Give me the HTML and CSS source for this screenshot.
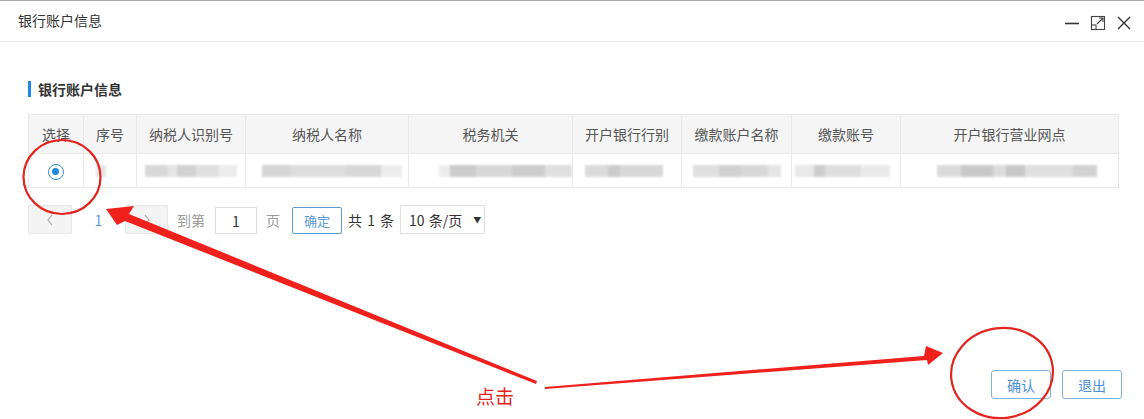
FILE: index.html
```html
<!DOCTYPE html>
<html lang="zh">
<head>
<meta charset="utf-8">
<title>银行账户信息</title>
<link rel="stylesheet" href="styles.css">
</head>
<body>
<div class="window">
  <div class="titlebar">
    <span class="title">银行账户信息</span>
    <div class="controls">
      <svg class="ic" width="16" height="16" viewBox="0 0 16 16"><line x1="1" y1="8.5" x2="15" y2="8.5" stroke="#333" stroke-width="1.6"/></svg>
      <svg class="ic" width="16" height="16" viewBox="0 0 16 16" fill="none" stroke="#444" stroke-width="1.1"><rect x="1.5" y="1.5" width="13" height="13"/><rect x="1.5" y="10" width="4.5" height="4.5"/><path d="M7 9 L13 3 M9 3 H13 V7"/></svg>
      <svg class="ic" width="16" height="16" viewBox="0 0 16 16"><path d="M2 2 L14 14 M14 2 L2 14" stroke="#333" stroke-width="1.4"/></svg>
    </div>
  </div>
  <div class="main">
    <div class="section-title">银行账户信息</div>
    <div class="table">
      <div class="row head">
        <div class="c c1">选择</div>
        <div class="c c2">序号</div>
        <div class="c c3">纳税人识别号</div>
        <div class="c c4">纳税人名称</div>
        <div class="c c5">税务机关</div>
        <div class="c c6">开户银行行别</div>
        <div class="c c7">缴款账户名称</div>
        <div class="c c8">缴款账号</div>
        <div class="c c9">开户银行营业网点</div>
      </div>
      <div class="row body">
        <div class="c c1"><span class="radio"><span class="dot"></span></span></div>
        <div class="c c2"><span class="blur b-s"></span></div>
        <div class="c c3"><span class="blur b-a"></span></div>
        <div class="c c4"><span class="blur b-b"></span></div>
        <div class="c c5"><span class="blur b-c"></span></div>
        <div class="c c6"><span class="blur b-d"></span></div>
        <div class="c c7"><span class="blur b-e"></span></div>
        <div class="c c8"><span class="blur b-f"></span></div>
        <div class="c c9"><span class="blur b-g"></span></div>
      </div>
    </div>
    <div class="pager">
      <span class="pbtn"><svg width="10" height="14" viewBox="0 0 10 14"><path d="M7 2 L3 7 L7 12" fill="none" stroke="#aaa" stroke-width="1.2"/></svg></span>
      <span class="pnum">1</span>
      <span class="pbtn"><svg width="10" height="14" viewBox="0 0 10 14"><path d="M3 2 L7 7 L3 12" fill="none" stroke="#aaa" stroke-width="1.2"/></svg></span>
      <span class="plabel">到第</span>
      <span class="pinput">1</span>
      <span class="plabel">页</span>
      <span class="pok">确定</span>
      <span class="ptotal">共 1 条</span>
      <span class="psel">10 条/页 <span class="caret">▼</span></span>
    </div>
    <div class="footer">
      <span class="fbtn">确认</span>
      <span class="fbtn">退出</span>
    </div>
  </div>
  <svg class="annot" width="1144" height="419" viewBox="0 0 1144 419">
    <ellipse cx="62" cy="176" rx="38.5" ry="37" fill="none" stroke="#e3241f" stroke-width="2.2"/>
    <ellipse cx="1002" cy="372" rx="51" ry="45" fill="none" stroke="#e3241f" stroke-width="2.2" transform="rotate(-8 1002 372)"/>
    <polygon points="106,208 134,205 129,213 537,380 536,383 125,220 117,224" fill="#f0201c"/>
    <polygon points="545,386 924,355 926,345 943,352 928,364 927,359 545,388" fill="#f0201c"/>
    <text x="476" y="403" class="click">点击</text>
  </svg>
</div>
</body>
</html>
```

FILE: styles.css
```css
* { box-sizing: border-box; }
html, body { margin: 0; padding: 0; background: #fff; }
body {
  font-family: "Noto Sans CJK SC", "Liberation Sans", sans-serif;
  font-size: 14px;
  color: #333;
}
.window {
  position: relative;
  width: 1144px;
  height: 419px;
  display: flex;
  flex-direction: column;
  border-top: 1px solid #a8a8a8;
  overflow: hidden;
}
.titlebar {
  height: 41px;
  flex: none;
  border-bottom: 1px solid #e8e8e8;
  display: flex;
  align-items: center;
  justify-content: space-between;
  padding: 0 12px 0 18px;
}
.title { font-size: 14px; color: #333; line-height: 1; margin-top: -2px; }
.controls { display: flex; align-items: center; gap: 10px; margin-top: 4px; }
.ic { display: block; }
.main {
  flex: 1;
  display: flex;
  flex-direction: column;
  padding: 39px 22px 20px 28px;
}
.section-title {
  font-weight: bold;
  font-size: 14px;
  line-height: 16px;
  border-left: 3px solid #1e88e5;
  padding-left: 7px;
  color: #333;
}
.table {
  margin-top: 17px;
  width: 1091px;
  border: 1px solid #e8e8e8;
}
.row { display: flex; }
.row.head { height: 39px; background: #f5f5f5; border-bottom: 1px solid #e8e8e8; }
.row.body { height: 33px; background: #fff; }
.c {
  display: flex;
  align-items: center;
  justify-content: center;
  border-right: 1px solid #e8e8e8;
  color: #555;
  font-size: 14px;
  position: relative;
}
.c:last-child { border-right: none; }
.c1 { width: 55px; }
.c2 { width: 53px; }
.c3 { width: 109px; }
.c4 { width: 163px; }
.c5 { width: 164px; }
.c6 { width: 109px; }
.c7 { width: 110px; }
.c8 { width: 109px; }
.c9 { flex: 1; }
.radio {
  width: 16px; height: 16px;
  border: 1.5px solid #3a8ee6;
  border-radius: 50%;
  display: flex; align-items: center; justify-content: center;
  margin-left: -1px;
  margin-top: 2px;
}
.dot { width: 7px; height: 7px; border-radius: 50%; background: #1e88e5; }
.blur {
  display: block;
  height: 12px;
  filter: blur(1.2px);
  opacity: 0.75;
}
.b-s { width: 10px; background: #ddd; margin-left: -18px; }
.b-a { width: 92px; background: linear-gradient(90deg,#ccc 0 25%,#ddd 25% 35%,#c4c4c4 35% 55%,#d6d6d6 55% 80%,#e6e6e6 80%); }
.b-b { width: 140px; background: linear-gradient(90deg,#c8c8c8 0 20%,#d2d2d2 20% 60%,#ccc 60% 85%,#e8e8e8 85%); margin-left: 10px; }
.b-c { width: 140px; background: linear-gradient(90deg,#e8e8e8 0 8%,#bbb 8% 28%,#ccc 28% 55%,#bdbdbd 55% 80%,#d6d6d6 80%); margin-left: 30px; }
.b-d { width: 78px; background: linear-gradient(90deg,#d0d0d0 0 30%,#bbb 30% 45%,#ccc 45%); margin-left: -6px; }
.b-e { width: 88px; background: linear-gradient(90deg,#d6d6d6 0 30%,#c2c2c2 30% 55%,#ccc 55% 85%,#ddd 85%); }
.b-f { width: 95px; background: linear-gradient(90deg,#e2e2e2 0 20%,#bdbdbd 20% 32%,#d4d4d4 32% 70%,#e4e4e4 70%); margin-left: -8px; }
.b-g { width: 160px; background: linear-gradient(90deg,#d0d0d0 0 15%,#b8b8b8 15% 35%,#d2d2d2 35% 43%,#b6b6b6 43% 55%,#d6d6d6 55% 85%,#c4c4c4 85%); margin-left: 15px; }
.pager {
  margin-top: 17px;
  display: flex;
  align-items: center;
  height: 29px;
}
.pbtn {
  width: 44px; height: 29px;
  background: #f4f4f4;
  border: 1px solid #e6e6e6;
  border-radius: 2px;
  display: flex; align-items: center; justify-content: center;
}
.pbtn:nth-child(3) { width: 43px; }
.pnum { width: 53px; text-align: center; color: #5b9bd5; font-size: 14px; }
.plabel { color: #999; font-size: 14px; margin: 0 10px 0 9px; }
.pinput {
  width: 42px; height: 27px;
  border: 1px solid #ddd;
  display: flex; align-items: center; justify-content: center;
  color: #333; font-size: 14px;
  margin-top: 2px;
}
.pok {
  width: 50px; height: 27px;
  border: 1px solid #5b9bd5;
  color: #5b9bd5;
  display: flex; align-items: center; justify-content: center;
  font-size: 13px;
  margin-top: 2px;
  margin-left: 2px;
  border-radius: 2px;
}
.ptotal { margin: 0 6px 0 6px; color: #333; font-size: 14px; word-spacing: 2px; }
.psel {
  width: 85px; height: 29px;
  border: 1px solid #e0e0e0;
  display: flex; align-items: center;
  padding-left: 8px;
  color: #333; font-size: 14px;
  white-space: pre;
  word-spacing: 1px;
}
.caret { font-size: 8px; margin-left: 7px; }
.footer {
  margin-top: auto;
  display: flex;
  justify-content: flex-end;
  gap: 11px;
}
.fbtn {
  width: 60px; height: 29px;
  border: 1px solid #7fb2e5;
  border-radius: 3px;
  color: #4a90d9;
  display: flex; align-items: center; justify-content: center;
  font-size: 14px;
}
.annot { position: absolute; left: 0; top: 0; pointer-events: none; }
.click { fill: #e3241f; font-size: 19px; font-family: "Noto Sans CJK SC", sans-serif; }
```
